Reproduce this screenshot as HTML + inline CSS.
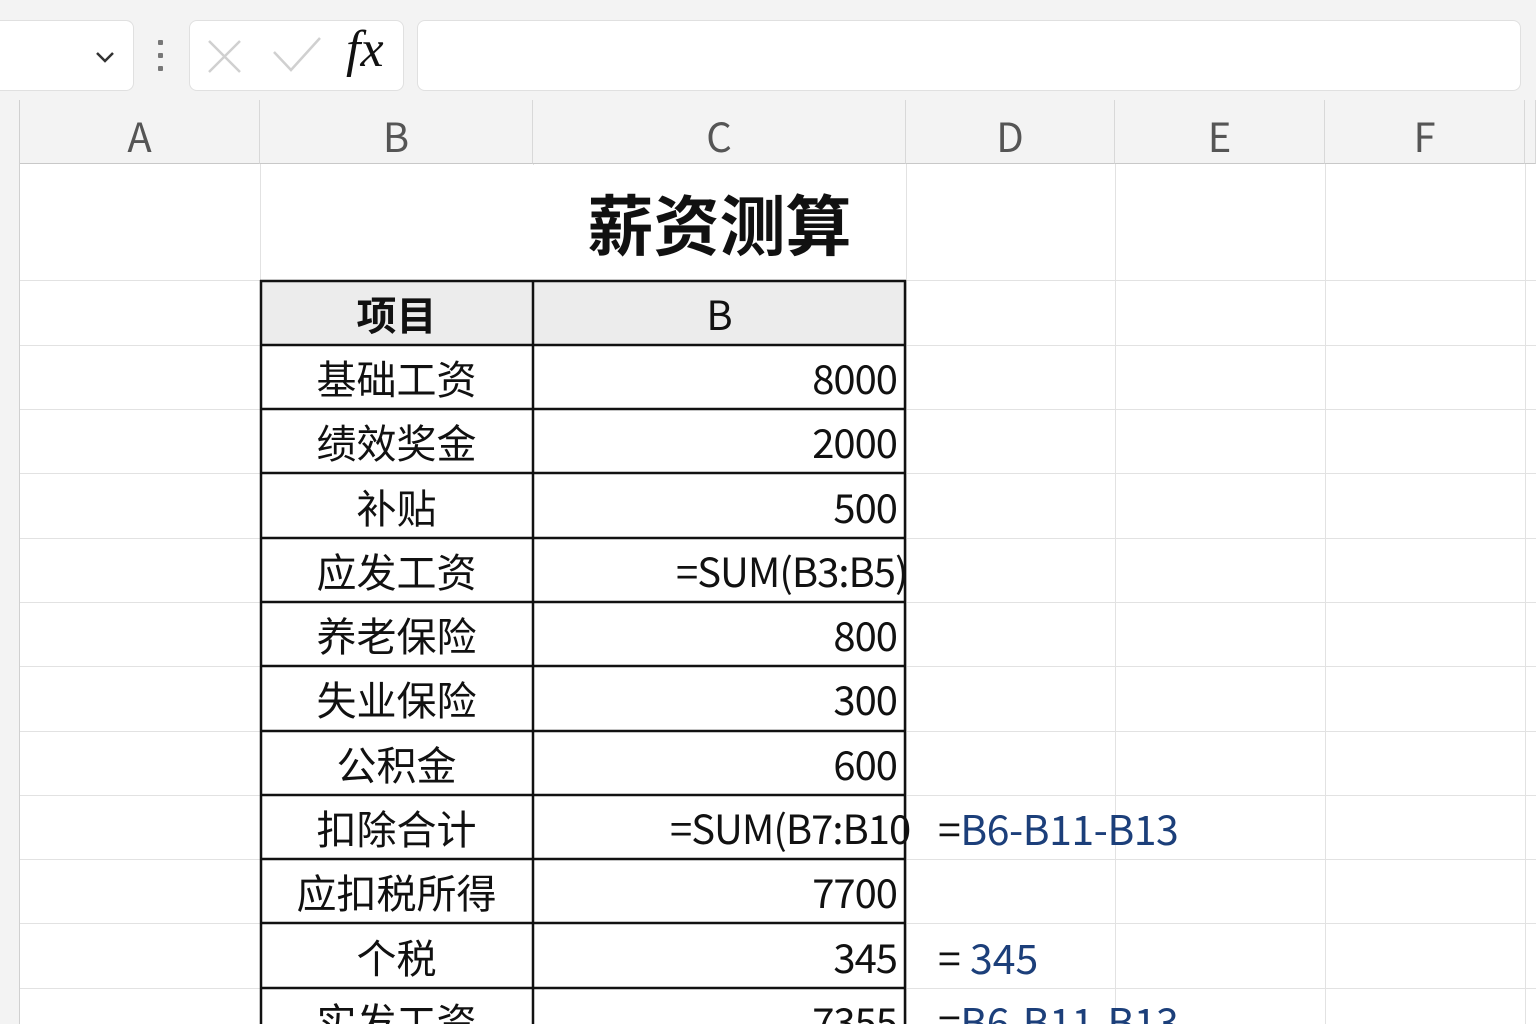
<!DOCTYPE html>
<html style="width:1536px;height:1024px;overflow:hidden"><head><meta charset="utf-8"><style>
*{margin:0;padding:0;box-sizing:border-box}
body{width:1536px;height:1024px;overflow:hidden;background:#fff;position:relative;font-family:"Liberation Sans","Noto Sans CJK SC",sans-serif}
.abs{position:absolute}
.top{left:0;top:0;width:1536px;height:100px;background:#f3f3f3}
.box{background:#fff;border:1.5px solid #e0e0e0;border-radius:8px}
.colh{top:100px;height:64px;background:#f3f3f3;border-bottom:1.5px solid #c8c8c8;font-size:40px;color:#555;text-align:center;line-height:70px;border-right:1px solid #d8d8d8;font-family:"Noto Sans CJK SC",sans-serif}
.vl{top:164px;width:1px;height:860px;background:#e2e2e2}
.hl{left:20px;width:1516px;height:1px;background:#e2e2e2}
.c{position:absolute;font-family:"Noto Sans CJK SC",sans-serif;font-size:40px;line-height:64px;color:#111}
.lab{left:260px;width:273px;text-align:center}
.val{left:533px;width:364px;text-align:right;letter-spacing:-1px}
.blue{color:#1c3f7a}
</style></head><body>
<div class="abs top"></div>
<div class="abs box" style="left:-10px;top:20px;width:144px;height:71px"></div>
<svg class="abs" style="left:94px;top:48px" width="24" height="18"><path d="M3 5 L11 13 L19 5" stroke="#333" stroke-width="2.5" fill="none"/></svg>
<div class="abs" style="left:158px;top:40px;width:5px;height:5px;background:#777;border-radius:1px"></div>
<div class="abs" style="left:158px;top:53px;width:5px;height:5px;background:#777;border-radius:1px"></div>
<div class="abs" style="left:158px;top:66px;width:5px;height:5px;background:#777;border-radius:1px"></div>
<div class="abs box" style="left:189px;top:20px;width:215px;height:71px"></div>
<svg class="abs" style="left:200px;top:30px" width="140" height="50"><path d="M9 11 L40 42 M40 11 L9 42" stroke="#d0d0d0" stroke-width="2.5"/><path d="M74 22 L91 40 L120 8" stroke="#d0d0d0" stroke-width="2.5" fill="none"/></svg>
<div class="abs" style="left:346px;top:20px;font-family:'Liberation Serif',serif;font-style:italic;font-size:52px;line-height:60px;color:#111">fx</div>
<div class="abs box" style="left:417px;top:20px;width:1104px;height:71px"></div>
<div class="abs" style="left:0;top:100px;width:20px;height:924px;background:#f3f3f3;border-right:1px solid #d0d0d0"></div>
<div class="abs colh" style="left:20px;width:240px">A</div>
<div class="abs colh" style="left:260px;width:273px">B</div>
<div class="abs colh" style="left:533px;width:373px">C</div>
<div class="abs colh" style="left:906px;width:209px">D</div>
<div class="abs colh" style="left:1115px;width:210px">E</div>
<div class="abs colh" style="left:1325px;width:200px">F</div>
<div class="abs colh" style="left:1525px;width:11px"></div>
<div class="abs vl" style="left:260px"></div><div class="abs vl" style="left:533px"></div><div class="abs vl" style="left:906px"></div><div class="abs vl" style="left:1115px"></div><div class="abs vl" style="left:1325px"></div><div class="abs vl" style="left:1525px"></div>
<div class="abs hl" style="top:280px"></div><div class="abs hl" style="top:345px"></div><div class="abs hl" style="top:409px"></div><div class="abs hl" style="top:473px"></div><div class="abs hl" style="top:538px"></div><div class="abs hl" style="top:602px"></div><div class="abs hl" style="top:666px"></div><div class="abs hl" style="top:731px"></div><div class="abs hl" style="top:795px"></div><div class="abs hl" style="top:859px"></div><div class="abs hl" style="top:923px"></div><div class="abs hl" style="top:988px"></div>
<div class="abs" style="left:533px;top:165px;width:373px;height:115px;background:#fff;text-align:center;font-family:'Noto Sans CJK SC',sans-serif;font-weight:bold;font-size:66px;line-height:115px;color:#111">薪资测算</div>
<div class="abs" style="left:260px;top:280px;width:646px;height:65px;background:#ececec"></div>
<svg class="abs" style="left:0;top:0" width="1536" height="1024">
<g stroke="#111" stroke-width="2.5">
<line x1="261" y1="280" x2="261" y2="1024"/><line x1="533" y1="280" x2="533" y2="1024"/><line x1="905" y1="280" x2="905" y2="1024"/>
<line x1="260" y1="281" x2="906" y2="281"/><line x1="260" y1="345" x2="906" y2="345"/><line x1="260" y1="409" x2="906" y2="409"/><line x1="260" y1="473" x2="906" y2="473"/><line x1="260" y1="538" x2="906" y2="538"/><line x1="260" y1="602" x2="906" y2="602"/><line x1="260" y1="666" x2="906" y2="666"/><line x1="260" y1="731" x2="906" y2="731"/><line x1="260" y1="795" x2="906" y2="795"/><line x1="260" y1="859" x2="906" y2="859"/><line x1="260" y1="923" x2="906" y2="923"/><line x1="260" y1="988" x2="906" y2="988"/>
</g></svg>
<div class="c lab" style="top:281px;font-weight:bold">项目</div>
<div class="c" style="left:533px;width:373px;text-align:center;top:281px">B</div>
<div class="c lab" style="top:345px">基础工资</div><div class="c val" style="top:345px">8000</div>
<div class="c lab" style="top:409px">绩效奖金</div><div class="c val" style="top:409px">2000</div>
<div class="c lab" style="top:474px">补贴</div><div class="c val" style="top:474px">500</div>
<div class="c lab" style="top:538px">应发工资</div><div class="c" style="left:676px;top:538px;letter-spacing:-1px">=SUM(B3:B5)</div>
<div class="c lab" style="top:602px">养老保险</div><div class="c val" style="top:602px">800</div>
<div class="c lab" style="top:666px">失业保险</div><div class="c val" style="top:666px">300</div>
<div class="c lab" style="top:731px">公积金</div><div class="c val" style="top:731px">600</div>
<div class="c lab" style="top:795px">扣除合计</div><div class="c" style="left:670px;top:795px;letter-spacing:-1px">=SUM(B7:B10</div>
<div class="c" style="left:938px;top:795px;font-size:41px;letter-spacing:-0.5px">=<span class="blue">B6-B11-B13</span></div>
<div class="c lab" style="top:859px">应扣税所得</div><div class="c val" style="top:859px">7700</div>
<div class="c lab" style="top:924px">个税</div><div class="c val" style="top:924px">345</div>
<div class="c" style="left:938px;top:924px;font-size:41px">= <span class="blue">345</span></div>
<div class="c lab" style="top:988px;height:36px;overflow:hidden">实发工资</div><div class="c val" style="top:988px;height:36px;overflow:hidden">7355</div>
<div class="c" style="left:938px;top:988px;height:36px;overflow:hidden;font-size:41px;letter-spacing:-0.5px">=<span class="blue">B6-B11-B13</span></div>
</body></html>
